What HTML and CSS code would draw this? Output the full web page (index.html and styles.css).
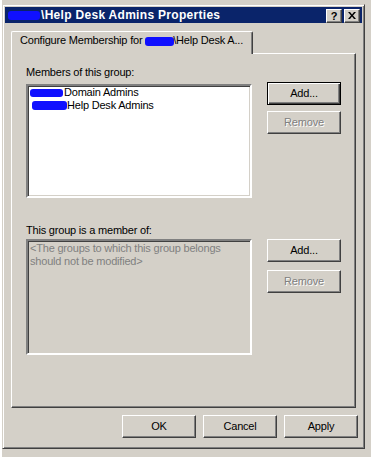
FILE: index.html
```html
<!DOCTYPE html>
<html>
<head>
    <title>Help Desk Admins Properties</title>
    <link rel="stylesheet" href="styles.css">
</head>
<body>
    <div class="screen">
        <div class="desk-left"></div>
        <div class="dialog">
            <div class="titlebar">
                <span class="title"><span class="redact r-title"></span>\Help Desk Admins Properties</span>
                <div class="caption-buttons">
                    <div class="cap-btn">?</div>
                    <div class="cap-btn close">
                        <svg width="8" height="7" viewBox="0 0 8 7">
                            <path d="M0 0h2l2 2.5L6 0h2L5 3.5 8 7H6L4 4.5 2 7H0l3-3.5z" fill="#000"/>
                        </svg>
                    </div>
                </div>
            </div>

            <div class="tabs">
                <div class="tab">Configure Membership for&nbsp;<span class="redact r-tab"></span>\Help Desk A...</div>
            </div>

            <div class="panel">
                <div class="label label-first">Members of this group:</div>
                <div class="row">
                    <div class="listbox">
                        <div class="item"><span class="redact r-item1"></span>Domain Admins</div>
                        <div class="item"><span class="redact r-item2"></span>Help Desk Admins</div>
                    </div>
                    <div class="side side-first">
                        <div class="btn default">Add...</div>
                        <div class="btn disabled">Remove</div>
                    </div>
                </div>

                <div class="label label-second">This group is a member of:</div>
                <div class="row">
                    <div class="listbox readonly">
                        <div class="item">&lt;The groups to which this group belongs</div>
                        <div class="item">should not be modified&gt;</div>
                    </div>
                    <div class="side side-second">
                        <div class="btn">Add...</div>
                        <div class="btn disabled">Remove</div>
                    </div>
                </div>
            </div>

            <div class="footer">
                <div class="btn">OK</div>
                <div class="btn">Cancel</div>
                <div class="btn">Apply</div>
            </div>
        </div>
    </div>
</body>
</html>
```

FILE: styles.css
```css
body { margin: 0; background: #d4d0c8; font-family: "Liberation Sans", Arial, sans-serif; font-size: 11px; line-height: 13px; letter-spacing: -0.2px; color: #000; }
.screen { display: flex; width: 371px; height: 457px; overflow: hidden; }
.desk-left { width: 2px; background: #fff; }

/* window frame */
.dialog { width: 359px; height: 441px; margin-top: 4px; padding: 1px; border: 1px solid; border-color: #d4d0c8 #404040 #404040 #d4d0c8; box-shadow: inset 1px 1px #fff, inset -1px -1px #808080; background: #d4d0c8; }
.titlebar { display: flex; align-items: center; justify-content: space-between; height: 16px; background: #0a246a; padding: 0 2px 0 3px; margin: 1px 1px 0 1px; }
.title { display: flex; align-items: center; color: #fff; font-weight: bold; font-size: 12px; letter-spacing: 0.3px; }
.caption-buttons { display: flex; gap: 2px; margin-top: 1px; }
.cap-btn { display: flex; align-items: center; justify-content: center; width: 14px; height: 12px; background: #d4d0c8; border: 1px solid; border-color: #fff #404040 #404040 #fff; box-shadow: inset -1px -1px #808080; font-weight: bold; font-size: 11px; line-height: 12px; letter-spacing: 0; color: #000; }

/* blue redaction marks */
.redact { display: inline-block; background: #1010ff; border-radius: 3px; vertical-align: middle; }
.r-title { width: 32px; height: 9px; margin-right: 1px; }
.r-tab { width: 29px; height: 9px; margin-right: -1px; }
.r-item1 { width: 33px; height: 8px; margin-right: 1px; }
.r-item2 { width: 35px; height: 9px; margin-left: 2px; }

/* tab + page */
.tabs { display: flex; margin: 8px 0 0 7px; }
.tab { position: relative; z-index: 1; width: 232px; height: 20px; margin-bottom: -1px; padding: 2px 0 0 8px; background: #d4d0c8; border-top: 1px solid #fff; border-left: 1px solid #fff; border-right: 1px solid #404040; border-radius: 2px 2px 0 0; box-shadow: inset -1px 0 #808080; white-space: nowrap; }
.panel { width: 329px; height: 341px; margin-left: 7px; padding: 12px 0 0 14px; border: 1px solid; border-color: #fff #404040 #404040 #fff; box-shadow: inset -1px -1px #808080; }

.label-first { margin-bottom: 5px; }
.label-second { margin: 26px 0 2px; }
.row { display: flex; gap: 15px; }

.listbox { box-sizing: border-box; width: 226px; height: 114px; padding: 0 2px; background: #fff; border: 2px solid; border-color: #808080 #fff #fff #808080; box-shadow: inset 1px 1px #404040, inset -1px -1px #d4d0c8; }
.listbox.readonly { height: 116px; padding-top: 1px; background: #d4d0c8; color: #808080; }
.item { display: flex; align-items: center; height: 13px; white-space: nowrap; }

.side { display: flex; flex-direction: column; }
.side-first { margin-top: -2px; gap: 6px; }
.side-second { gap: 8px; }

/* classic push buttons */
.btn { box-sizing: border-box; display: flex; align-items: center; justify-content: center; width: 74px; height: 23px; background: #d4d0c8; border: 1px solid; border-color: #fff #404040 #404040 #fff; box-shadow: inset -1px -1px #808080; }
.btn.default { border: 1px solid #000; box-shadow: inset 1px 1px #fff, inset -1px -1px #404040, inset -2px -2px #808080; }
.btn.disabled { color: #808080; text-shadow: 1px 1px #fff; }

.footer { display: flex; justify-content: flex-end; gap: 7px; margin-top: 7px; padding-right: 5px; }
```
